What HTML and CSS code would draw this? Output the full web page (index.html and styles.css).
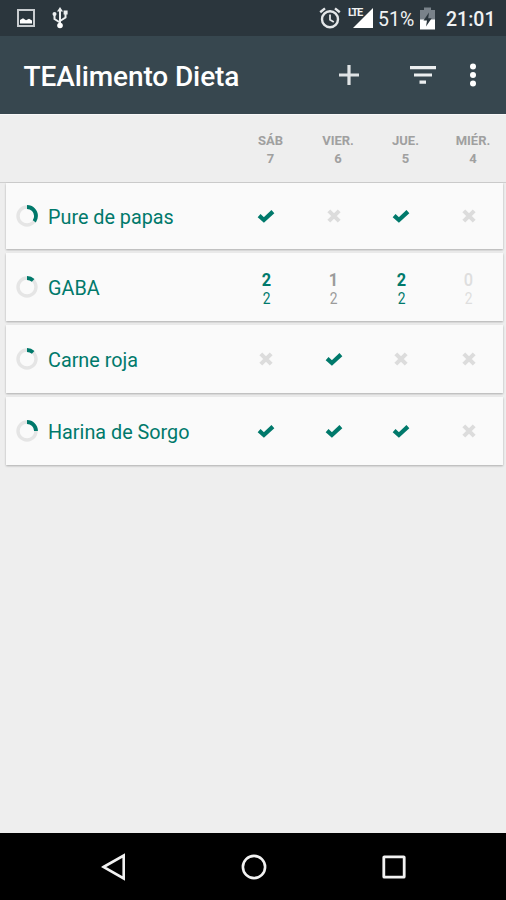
FILE: index.html
```html
<!DOCTYPE html>
<html lang="es">
<head>
    <meta charset="UTF-8">
    <meta name="viewport" content="width=device-width, initial-scale=1.0">
    <title>TEAlimento Dieta</title>
    <link rel="stylesheet" href="styles.css">
</head>
<body>

    <svg class="symbols">
        <symbol id="check" viewBox="0 0 18 14">
            <path d="M2.1 6.6 L6.9 11 L15.9 2.6" fill="none" stroke="#00796b" stroke-width="4.2"/>
        </symbol>
        <symbol id="cross" viewBox="0 0 14 14">
            <path d="M1.8 1.8 L12.2 12.2 M12.2 1.8 L1.8 12.2" fill="none" stroke="#dcdcdc" stroke-width="4"/>
        </symbol>
    </svg>

    <div class="status-bar">
        <svg class="icon-picture" width="18" height="18" viewBox="0 0 18 18">
            <rect x="1" y="1" width="16" height="16" fill="none" stroke="#c9cdd0" stroke-width="2"/>
            <path d="M3 14.5 V11 L6 9.2 L9 11.2 L12 9.8 L15 11.5 V14.5 Z" fill="#fff"/>
        </svg>
        <svg class="icon-usb" width="16" height="22" viewBox="0 0 16 22">
            <path d="M8 3 V19 M8 15.5 L2.5 12 V7 M8 14 L13.5 10.5 V6" fill="none" stroke="#eceff0" stroke-width="2"/>
            <path d="M8 0 L11 4.5 H5 Z" fill="#eceff0"/>
            <circle cx="8" cy="18.5" r="2.8" fill="#fff"/>
            <circle cx="2.5" cy="7" r="2" fill="#eceff0"/>
            <rect x="11.6" y="3.5" width="4" height="4" fill="#eceff0"/>
        </svg>
        <div class="spacer"></div>
        <svg class="icon-alarm" width="22" height="22" viewBox="0 0 22 22">
            <circle cx="11" cy="12.3" r="8" fill="none" stroke="#e4e7e9" stroke-width="2.4"/>
            <path d="M1.2 5.3 L6 1.4 M20.8 5.3 L16 1.4" stroke="#e4e7e9" stroke-width="2.4"/>
            <path d="M11 7.5 V12.8 L14.8 15" fill="none" stroke="#e4e7e9" stroke-width="1.8"/>
        </svg>
        <div class="signal">
            <svg width="20" height="20" viewBox="0 0 20 20">
                <path d="M20 0 V20 H0 Z" fill="#fff"/>
            </svg>
            <span class="lte">LTE</span>
        </div>
        <span class="battery-level">51%</span>
        <svg class="icon-battery" width="17" height="23" viewBox="0 0 17 23">
            <path d="M5 0.5 H12 V3 H16 V13 H1 V3 H5 Z" fill="#79828a"/>
            <path d="M1 12.5 H16 V22.5 H1 Z" fill="#fff"/>
            <path d="M10 5.5 L4.5 13.5 H8 L7 19.5 L12.7 11.3 H9.2 Z" fill="#2b363d"/>
        </svg>
        <span class="clock">21:01</span>
    </div>

    <div class="app-bar">
        <h1>TEAlimento Dieta</h1>
        <svg class="icon-add" width="20" height="20" viewBox="0 0 20 20">
            <path d="M10 0 V20 M0 10 H20" stroke="#dfe3e5" stroke-width="3.2"/>
        </svg>
        <svg class="icon-filter" width="26" height="18" viewBox="0 0 26 18">
            <path d="M0 1.7 H26 M4 9 H22 M9.5 16.2 H16" stroke="#eceff0" stroke-width="3.2"/>
        </svg>
        <svg class="icon-more" width="6" height="24" viewBox="0 0 6 24">
            <circle cx="3" cy="3.6" r="3" fill="#fff"/>
            <circle cx="3" cy="12" r="3" fill="#fff"/>
            <circle cx="3" cy="20.4" r="3" fill="#fff"/>
        </svg>
    </div>

    <div class="days">
        <div class="day">SÁB<br>7</div>
        <div class="day">VIER.<br>6</div>
        <div class="day">JUE.<br>5</div>
        <div class="day">MIÉR.<br>4</div>
    </div>

    <div class="habits">
        <div class="habit">
            <svg class="ring" viewBox="0 0 22 22">
                <circle class="track" cx="11" cy="11" r="9"/>
                <circle class="score" cx="11" cy="11" r="9" pathLength="100" stroke-dasharray="35 100"/>
            </svg>
            <span class="name">Pure de papas</span>
            <div class="cell"><svg class="check"><use href="#check"/></svg></div>
            <div class="cell"><svg class="cross"><use href="#cross"/></svg></div>
            <div class="cell"><svg class="check"><use href="#check"/></svg></div>
            <div class="cell"><svg class="cross"><use href="#cross"/></svg></div>
        </div>
        <div class="habit">
            <svg class="ring" viewBox="0 0 22 22">
                <circle class="track" cx="11" cy="11" r="9"/>
                <circle class="score" cx="11" cy="11" r="9" pathLength="100" stroke-dasharray="12 100"/>
            </svg>
            <span class="name">GABA</span>
            <div class="cell done"><b>2</b><span>2</span></div>
            <div class="cell partial"><b>1</b><span>2</span></div>
            <div class="cell done"><b>2</b><span>2</span></div>
            <div class="cell none"><b>0</b><span>2</span></div>
        </div>
        <div class="habit">
            <svg class="ring" viewBox="0 0 22 22">
                <circle class="track" cx="11" cy="11" r="9"/>
                <circle class="score" cx="11" cy="11" r="9" pathLength="100" stroke-dasharray="12 100"/>
            </svg>
            <span class="name">Carne roja</span>
            <div class="cell"><svg class="cross"><use href="#cross"/></svg></div>
            <div class="cell"><svg class="check"><use href="#check"/></svg></div>
            <div class="cell"><svg class="cross"><use href="#cross"/></svg></div>
            <div class="cell"><svg class="cross"><use href="#cross"/></svg></div>
        </div>
        <div class="habit">
            <svg class="ring" viewBox="0 0 22 22">
                <circle class="track" cx="11" cy="11" r="9"/>
                <circle class="score" cx="11" cy="11" r="9" pathLength="100" stroke-dasharray="25 100"/>
            </svg>
            <span class="name">Harina de Sorgo</span>
            <div class="cell"><svg class="check"><use href="#check"/></svg></div>
            <div class="cell"><svg class="check"><use href="#check"/></svg></div>
            <div class="cell"><svg class="check"><use href="#check"/></svg></div>
            <div class="cell"><svg class="cross"><use href="#cross"/></svg></div>
        </div>
    </div>

    <div class="nav-bar">
        <svg width="26" height="28" viewBox="0 0 26 28">
            <path d="M2.5 14 L22.7 2.6 V25.4 Z" fill="none" stroke="#f2f2f2" stroke-width="2.6"/>
        </svg>
        <svg width="26" height="28" viewBox="0 0 26 28">
            <circle cx="13" cy="14" r="11.1" fill="none" stroke="#f2f2f2" stroke-width="2.6"/>
        </svg>
        <svg width="26" height="28" viewBox="0 0 26 28">
            <rect x="2.8" y="3.8" width="20.4" height="20.4" rx="0.5" fill="none" stroke="#f2f2f2" stroke-width="2.8"/>
        </svg>
    </div>

</body>
</html>
```

FILE: styles.css
```css
* {
    box-sizing: border-box;
}

body {
    margin: 0;
    height: 900px;
    display: flex;
    flex-direction: column;
    background-color: #eeeeee;
    font-family: Roboto, sans-serif;
    overflow: hidden;
}

svg {
    display: block;
    flex-shrink: 0;
}

.symbols {
    display: none;
}

.status-bar {
    height: 36px;
    display: flex;
    align-items: center;
    padding: 0 11px 0 16.5px;
    background-color: #2b363d;
    color: #f0f2f3;
}

.icon-usb {
    margin-left: 17.5px;
}

.spacer {
    flex: 1;
}

.icon-alarm {
    margin-right: 7px;
}

.signal {
    position: relative;
    width: 25px;
    padding-left: 5px;
    margin-right: 5px;
}

/* network label sits over the signal triangle */
.lte {
    position: absolute;
    left: 0;
    top: -1px;
    font-size: 11px;
    line-height: 12px;
    font-weight: 700;
    letter-spacing: -1.3px;
}

.battery-level {
    width: 41px;
    padding-top: 2px;
    font-size: 19.5px;
}

.icon-battery {
    margin-right: 10px;
}

.clock {
    width: 49px;
    padding-top: 2px;
    font-size: 19.5px;
    font-weight: 500;
    white-space: nowrap;
}

.app-bar {
    height: 78px;
    display: flex;
    align-items: center;
    padding: 0 30px 0 23.5px;
    background-color: #37474f;
    color: #fff;
}

h1 {
    flex: 1;
    margin: 0;
    padding-top: 2px;
    font-size: 28px;
    font-weight: 500;
    letter-spacing: -0.1px;
    white-space: nowrap;
}

.icon-add {
    margin-right: 51px;
}

.icon-filter {
    margin-right: 34px;
}

.days {
    height: 68px;
    display: flex;
    padding: 17px 0 0 236.75px;
    border-top: 1px solid #f8f8f8;
    color: #a0a0a0;
    font-size: 13px;
    font-weight: 700;
    line-height: 17.5px;
    text-align: center;
}

.day {
    width: 67.5px;
    flex-shrink: 0;
}

.habits {
    flex: 1;
    display: flex;
    flex-direction: column;
    gap: 4px;
    padding: 0 3.5px 0 5.5px;
    border-top: 1px solid #cfcfcf;
}

.habit {
    height: 68px;
    display: flex;
    align-items: center;
    padding-left: 10.5px;
    background-color: #fafafa;
    box-shadow: 0 1px 2px rgba(0, 0, 0, 0.28);
}

.habit:first-child {
    height: 66px;
}

.ring {
    width: 22px;
    height: 22px;
    transform: rotate(-90deg);
}

.ring circle {
    fill: none;
    stroke-width: 3.4;
}

.track {
    stroke: #e5e5e5;
}

.ring .score {
    stroke: #00796b;
    stroke-width: 3.8;
}

.name {
    flex: 1;
    padding: 2px 0 0 10px;
    color: #00796b;
    font-size: 19.8px;
}

.cell {
    width: 67.5px;
    display: flex;
    flex-direction: column;
    align-items: center;
}

.check {
    width: 18px;
    height: 14px;
}

.cross {
    width: 14px;
    height: 14px;
}

.cell b,
.cell span {
    transform: scaleX(0.86);
}

.cell b {
    padding-top: 3px;
    font-size: 19px;
    line-height: 20px;
}

.cell span {
    font-size: 16px;
    line-height: 18px;
}

.done {
    color: #00796b;
}

.partial {
    color: #9b9b9b;
}

.none {
    color: #dedede;
}

.none b {
    font-weight: 500;
}

.nav-bar {
    height: 67px;
    display: flex;
    align-items: center;
    justify-content: space-between;
    padding: 0 99px 0 100.5px;
    background-color: #000;
}
```
